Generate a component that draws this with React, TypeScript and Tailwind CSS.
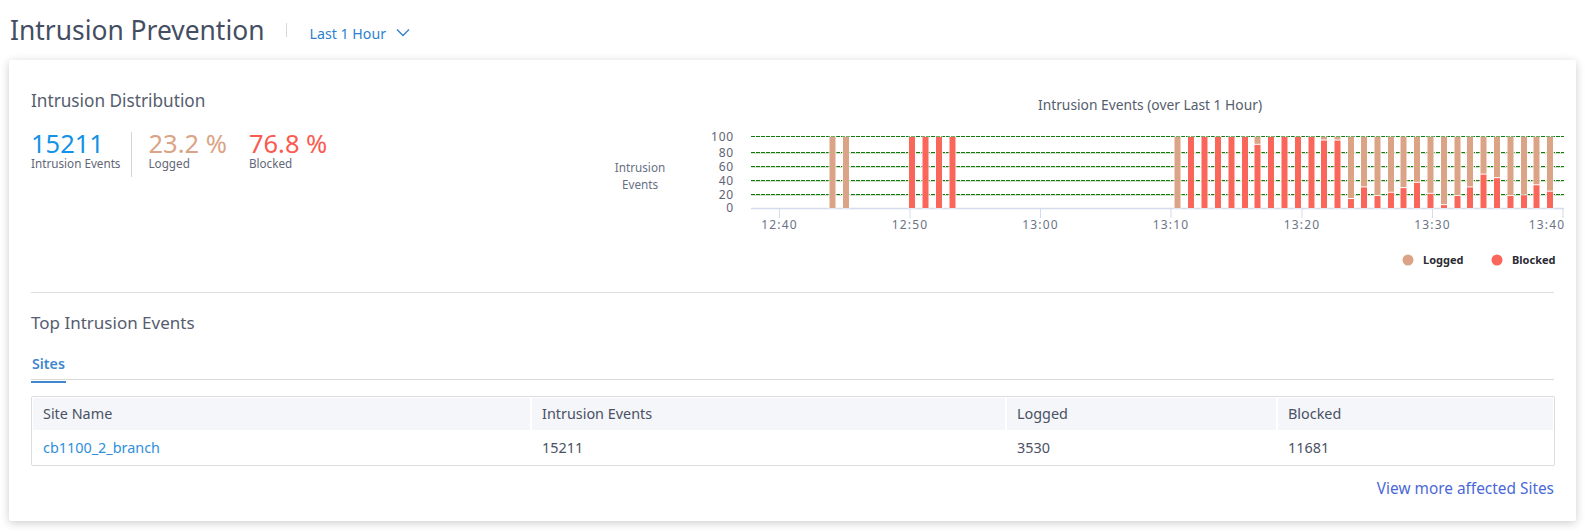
import React from "react";

const LOGGED = "#dba486";
const BLOCKED = "#fb665a";
// [left edge in px, blocked percentage]
const bars: [number, number][] = [
  [829.5, 0], [843, 0],
  [909, 100], [922.5, 100], [936, 100], [949.5, 100],
  [1174.5, 0], [1188, 100], [1201.5, 100], [1215, 100], [1228.5, 100], [1242, 100],
  [1254.5, 89], [1268, 100], [1281.5, 100], [1295, 100], [1308.5, 100], [1321, 95], [1334.5, 95],
  [1348, 12.6], [1361, 29], [1374.5, 17], [1388, 21.5], [1400.5, 28], [1414, 35.5], [1427.5, 20],
  [1441, 4], [1454.5, 17], [1467, 29], [1480.5, 47], [1494, 42], [1507.5, 17], [1521, 18], [1533.5, 32], [1547, 23],
];
const TOP = 137;
const BASE = 208;
const grid: [number, string][] = [[136.5, "100"], [152.5, "80"], [166.5, "60"], [180.5, "40"], [194.5, "20"], [208, "0"]];
const ticks: [number, string][] = [[779.5, "12:40"], [910, "12:50"], [1040.5, "13:00"], [1171, "13:10"], [1302, "13:20"], [1432.5, "13:30"], [1563, "13:40"]];

function Chart() {
  const h = BASE - TOP;
  return (
    <svg viewBox="600 90 966 190" width={966} height={190} className="mt-[30px] shrink-0 [font-family:'Noto_Sans',sans-serif]">
      <text x={1150} y={110} textAnchor="middle" fontSize={13.8} fill="#555d6e">Intrusion Events (over Last 1 Hour)</text>
      <text x={640} y={172} textAnchor="middle" fontSize={11.7} fill="#66707f">Intrusion</text>
      <text x={640} y={189} textAnchor="middle" fontSize={11.7} fill="#66707f">Events</text>
      {grid.slice(0, 5).map(([y], i) => (
        <g key={y}>
          {i > 0 && <line x1={751} x2={1564} y1={y + 1} y2={y + 1} stroke="#cfe3cb" strokeWidth={1} />}
          <line x1={751} x2={1564} y1={y} y2={y} stroke="#127a0a" strokeWidth={1} strokeDasharray="4 1" />
        </g>
      ))}
      {grid.map(([y, l]) => (
        <text key={l} x={734} y={y + 4} textAnchor="end" fontSize={12} letterSpacing={0.8} fill="#5f6472">{l}</text>
      ))}
      <line x1={751} x2={1564} y1={208.5} y2={208.5} stroke="#d2dcec" strokeWidth={1.5} />
      {ticks.map(([x, l], i) => (
        <g key={l}>
          <line x1={x} x2={x} y1={208} y2={218} stroke="#d2dcec" />
          <text x={i === 6 ? x - 16 : x} y={229} textAnchor="middle" fontSize={12} letterSpacing={1.2} fill="#6b7385">{l}</text>
        </g>
      ))}
      {bars.map(([x, b], i) => {
        const bh = (b / 100) * h;
        return (
          <g key={i}>
            <rect x={x - 1} y={TOP - 0.5} width={8} height={h + 1} fill="#ffffff" fillOpacity={0.75} />
            {b < 100 && <rect x={x} y={TOP} width={6} height={h - bh - (b > 0 ? 1 : 0)} fill={LOGGED} />}
            {b > 0 && <rect x={x} y={BASE - bh} width={6} height={bh} fill={BLOCKED} />}
          </g>
        );
      })}
      <circle cx={1408} cy={260} r={5.5} fill={LOGGED} />
      <text x={1423} y={264} fontSize={11} fontWeight={700} fill="#2b2b33">Logged</text>
      <circle cx={1497} cy={260} r={5.5} fill={BLOCKED} />
      <text x={1512} y={264} fontSize={11} fontWeight={700} fill="#2b2b33">Blocked</text>
    </svg>
  );
}

function Stat({ value, label, color, className = "" }: { value: string; label: string; color: string; className?: string }) {
  return (
    <div className={`pb-[7px] ${className}`}>
      <div className={`text-[25.5px] leading-[22px] ${color}`}>{value}</div>
      <div className="mt-[2px] text-[11.7px] leading-[14px] text-[#636776]">{label}</div>
    </div>
  );
}

export default function App() {
  const headers = ["Site Name", "Intrusion Events", "Logged", "Blocked"];
  const cols = ["w-[497px]", "w-[473px]", "w-[269px]", "flex-1"];
  const cells = ["cb1100_2_branch", "15211", "3530", "11681"];
  return (
    <div className="w-[1585px] h-[531px] bg-white overflow-hidden [font-family:'Noto_Sans',sans-serif]">
      <header className="h-[60px] pl-[10px] flex items-center">
        <h1 className="text-[26.4px] leading-[36px] text-[#444e62]">Intrusion Prevention</h1>
        <div className="ml-[22px] w-px h-[14px] bg-[#d8d8d8]" />
        <span className="ml-[22px] mt-[7px] text-[14.2px] text-[#2f7fd0]">Last 1 Hour</span>
        <svg width="14" height="9" viewBox="0 0 14 9" className="ml-[10px] mt-[5px]" fill="none" stroke="#2f7fd0" strokeWidth="1.3">
          <path d="M1 1.5 L7 7.5 L13 1.5" />
        </svg>
      </header>
      <main className="ml-[9px] w-[1567px] h-[461px] bg-white rounded-[2px] shadow-[0_2px_10px_rgba(0,0,0,0.2)]">
        <section className="h-[232px] pl-[22px] pr-[10px] flex justify-between">
          <div className="pt-[30px]">
            <h2 className="text-[17.2px] leading-[22px] text-[#555d6e]">Intrusion Distribution</h2>
            <div className="mt-[20px] flex items-stretch">
              <Stat value="15211" label="Intrusion Events" color="text-[#1492e6]" className="pr-[11px] border-r border-[#d4d4d4]" />
              <Stat value="23.2 %" label="Logged" color="text-[#dba486]" className="ml-[16px]" />
              <Stat value="76.8 %" label="Blocked" color="text-[#fb5a50]" className="ml-[22px]" />
            </div>
          </div>
          <Chart />
        </section>
        <div className="mx-[22px] h-px bg-[#dedede]" />
        <section className="px-[22px]">
          <h2 className="mt-[18px] text-[17px] leading-[24px] text-[#555d6e]">Top Intrusion Events</h2>
          <div className="mt-[16px] border-b border-[#d9d9d9] h-[29px]">
            <div className="inline-block h-[29px] px-[1px] border-b-2 border-[#3f87cf] text-[14.2px] leading-[20px] font-semibold text-[#3f87cf]">Sites</div>
          </div>
          <div className="mt-[16px] w-[1524px] border border-[#dcdcdc] rounded-[2px] p-px pb-0">
            <div className="flex gap-[2px] h-[32px]">
              {headers.map((h, i) => (
                <div key={h} className={`${cols[i]} bg-[#f4f6fa] pl-[10px] text-[14.4px] leading-[32px] text-[#4a5163]`}>{h}</div>
              ))}
            </div>
            <div className="flex gap-[2px] h-[35px]">
              {cells.map((c, i) => (
                <div key={c} className={`${cols[i]} pl-[10px] text-[14.4px] leading-[35px] ${i === 0 ? "text-[#2f8fdc]" : "text-[#4a5163]"}`}>{c}</div>
              ))}
            </div>
          </div>
          <div className="mt-[12px] text-right text-[15.4px] leading-[22px] text-[#4a68d8]">View more affected Sites</div>
        </section>
      </main>
    </div>
  );
}
